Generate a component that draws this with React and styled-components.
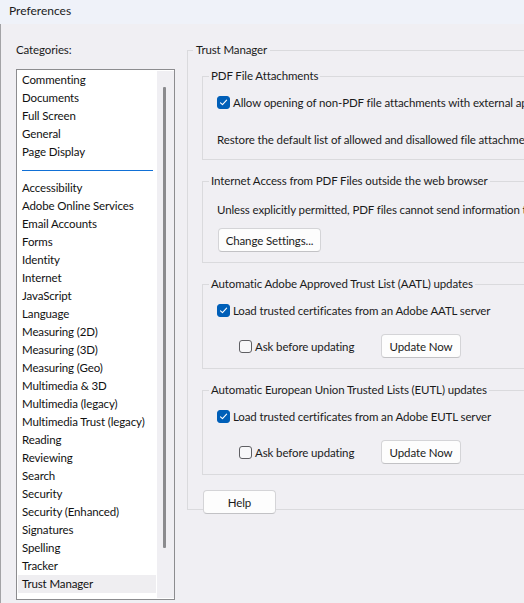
import React from "react";
import styled, { createGlobalStyle } from "styled-components";

const Global = createGlobalStyle`
  html, body { margin: 0; padding: 0; background: #f0eff3; }
  body { width: 524px; height: 603px; overflow: hidden; }
  #root { width: 524px; height: 603px; overflow: hidden; }
  * { box-sizing: border-box; }
`;

const FONT = `Lato, "Open Sans", sans-serif`;

const Window = styled.div`
  width: 524px;
  height: 603px;
  display: flex;
  flex-direction: column;
  font-family: ${FONT};
  font-size: 11.5px;
  letter-spacing: -0.12px;
  color: #1b1b1b;
  background: #f0eff3;
  overflow: hidden;
`;

const TitleBar = styled.div`
  height: 24px;
  flex: none;
  background: #eff2f9;
  padding: 0 0 3px 9px;
  display: flex;
  align-items: center;
  line-height: 16px;
  font-size: 12px;
  letter-spacing: 0;
`;

const Main = styled.div`
  flex: 1;
  border-left: 1px solid #a3a3a6;
  padding: 18px 0 0 15px;
  display: grid;
  grid-template-columns: 159px 420px;
  column-gap: 12px;
  align-items: start;
`;

const LeftCol = styled.div`
  display: flex;
  flex-direction: column;
`;

const Label = styled.div`
  line-height: 16px;
  margin-bottom: 11px;
`;

const ListBox = styled.div`
  height: 531px;
  border: 1px solid #8c8c8f;
  background: #ffffff;
  display: grid;
  grid-template-columns: minmax(0, 1fr) 17px;
  overflow: hidden;
`;

const Items = styled.div`
  padding: 1px 0 0 1px;
  display: flex;
  flex-direction: column;
  overflow: hidden;
`;

const Item = styled.div`
  height: 18px;
  line-height: 18px;
  padding-left: 4px;
  margin-right: 1px;
  white-space: nowrap;
  color: #111;
  background: ${(p) => (p.$selected ? "#efeef1" : "transparent")};
`;

const SepRow = styled.div`
  height: 18px;
  display: flex;
  align-items: center;
  padding: 0 4px;
`;

const SepLine = styled.div`
  width: 131px;
  height: 1px;
  background: #1170d6;
`;

const ScrollTrack = styled.div`
  background: #f0eff3;
  margin: 1px 0;
  padding: 16px 0 0 6px;
`;

const ScrollThumb = styled.div`
  width: 3px;
  height: 461px;
  background: #8b8b8e;
  border-radius: 1px;
`;

const Frame = styled.fieldset`
  margin: 0;
  border: 1px solid #dadadd;
  padding: ${(p) => p.$pad};
  min-width: 0;
  display: flex;
  flex-direction: column;
`;

const Legend = styled.legend`
  line-height: 16px;
  padding: 0 ${(p) => p.$px}px;
  margin-left: ${(p) => p.$ml}px;
  white-space: nowrap;
`;

const Group = styled(Frame)`
  margin-top: ${(p) => p.$mt}px;
`;

const Row = styled.div`
  display: flex;
  align-items: center;
  height: ${(p) => p.$h || 18}px;
  margin-top: ${(p) => p.$mt || 0}px;
  padding-left: ${(p) => p.$pl || 0}px;
  white-space: nowrap;
`;

const CheckLabel = styled.label`
  display: flex;
  align-items: center;
  gap: 3px;
  width: ${(p) => (p.$w ? `${p.$w}px` : "auto")};
  flex: none;
`;

const Box = styled.span`
  width: 13px;
  height: 13px;
  border-radius: 3px;
  flex: none;
  display: flex;
  align-items: center;
  justify-content: center;
  background: ${(p) => (p.$on ? "#005fb8" : "#f7f7f9")};
  border: 1px solid ${(p) => (p.$on ? "#005fb8" : "#5f5f63")};
`;

const Button = styled.button`
  font-family: ${FONT};
  font-size: 11.5px;
  letter-spacing: -0.12px;
  color: #1b1b1b;
  height: 24px;
  width: ${(p) => p.$w}px;
  margin-left: ${(p) => p.$ml || 0}px;
  padding: 0;
  background: #fdfdfd;
  border: 1px solid #d4d4d7;
  border-bottom-color: #c2c2c5;
  border-radius: 4px;
  flex: none;
`;

const HelpWrap = styled.div`
  margin-top: -20px;
  padding-left: 16px;
  position: relative;
`;

const Check = ({ on }) => (
  <Box $on={on}>
    {on && (
      <svg width="9" height="9" viewBox="0 0 9 9">
        <path d="M1.5 4.8 L3.5 6.6 L7.6 2.2" fill="none" stroke="#fff" strokeWidth="1.1" strokeLinecap="round" strokeLinejoin="round" />
      </svg>
    )}
  </Box>
);

const top = ["Commenting", "Documents", "Full Screen", "General", "Page Display"];
const rest = [
  "Accessibility",
  "Adobe Online Services",
  "Email Accounts",
  "Forms",
  "Identity",
  "Internet",
  "JavaScript",
  "Language",
  "Measuring (2D)",
  "Measuring (3D)",
  "Measuring (Geo)",
  "Multimedia & 3D",
  "Multimedia (legacy)",
  "Multimedia Trust (legacy)",
  "Reading",
  "Reviewing",
  "Search",
  "Security",
  "Security (Enhanced)",
  "Signatures",
  "Spelling",
  "Tracker",
  "Trust Manager",
];

const UpdateGroup = ({ title, label, mt }) => (
  <Group $mt={mt} $pad="0 0 10px 14px">
    <Legend $ml={-8} $px={2}>{title}</Legend>
    <Row $mt={9}>
      <CheckLabel>
        <Check on />
        {label}
      </CheckLabel>
    </Row>
    <Row $h={24} $mt={15} $pl={22}>
      <CheckLabel $w={142}>
        <Check />
        Ask before updating
      </CheckLabel>
      <Button $w={80}>Update Now</Button>
    </Row>
  </Group>
);

export default function App() {
  return (
    <Window>
      <Global />
      <TitleBar>Preferences</TitleBar>
      <Main>
        <LeftCol>
          <Label>Categories:</Label>
          <ListBox>
            <Items>
              {top.map((t) => (
                <Item key={t}>{t}</Item>
              ))}
              <SepRow>
                <SepLine />
              </SepRow>
              {rest.map((t) => (
                <Item key={t} $selected={t === "Trust Manager"}>
                  {t}
                </Item>
              ))}
            </Items>
            <ScrollTrack>
              <ScrollThumb />
            </ScrollTrack>
          </ListBox>
        </LeftCol>
        <div>
          <Frame $pad="10px 0 34px 14px">
            <Legend $ml={-9} $px={3}>Trust Manager</Legend>
            <Group $mt={0} $pad="0 0 12px 14px">
              <Legend $ml={-8} $px={2}>PDF File Attachments</Legend>
              <Row $mt={9}>
                <CheckLabel>
                  <Check on />
                  Allow opening of non-PDF file attachments with external applications
                </CheckLabel>
              </Row>
              <Row $h={16} $mt={20}>
                Restore the default list of allowed and disallowed file attachment types:
              </Row>
            </Group>
            <Group $mt={13} $pad="0 0 10px 14px">
              <Legend $ml={-8} $px={2}>Internet Access from PDF Files outside the web browser</Legend>
              <Row $h={16} $mt={12}>
                Unless explicitly permitted, PDF files cannot send information to the Internet.
              </Row>
              <Row $h={24} $mt={11}>
                <Button $w={103} $ml={1}>Change Settings...</Button>
              </Row>
            </Group>
            <UpdateGroup
              mt={13}
              title="Automatic Adobe Approved Trust List (AATL) updates"
              label="Load trusted certificates from an Adobe AATL server"
            />
            <UpdateGroup
              mt={13}
              title="Automatic European Union Trusted Lists (EUTL) updates"
              label="Load trusted certificates from an Adobe EUTL server"
            />
          </Frame>
          <HelpWrap>
            <Button $w={73}>Help</Button>
          </HelpWrap>
        </div>
      </Main>
    </Window>
  );
}
